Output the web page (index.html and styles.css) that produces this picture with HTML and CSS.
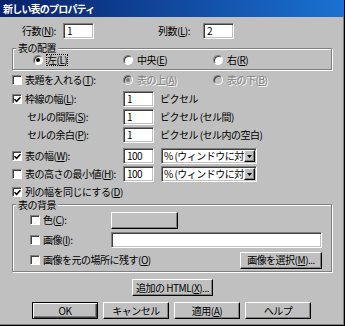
FILE: index.html
```html
<!DOCTYPE html>
<html lang="ja">
<head>
  <meta charset="UTF-8" />
  <title>新しい表のプロパティ</title>
  <link rel="stylesheet" href="styles.css">
</head>
<body>
  <div class="dialog">
    <div class="titlebar">新しい表のプロパティ</div>

    <div class="body">
      <div class="row row-count">
        <span class="lbl-rows">行数(<u>N</u>):</span>
        <span class="field w-num">1</span>
        <span class="lbl-cols">列数(<u>L</u>):</span>
        <span class="field w-num">2</span>
      </div>

      <div class="group group-align">
        <span class="legend">表の配置</span>
        <div class="row radios">
          <span class="opt"><span class="radio checked"></span><span class="focus">左(<u>L</u>)</span></span>
          <span class="opt"><span class="radio"></span>中央(<u>E</u>)</span>
          <span class="opt"><span class="radio"></span>右(<u>R</u>)</span>
        </div>
      </div>

      <div class="row row-caption">
        <span class="col-a"><span class="check"></span>表題を入れる(<u>T</u>):</span>
        <span class="opt disabled"><span class="radio checked"></span>表の上(<u>A</u>)</span>
        <span class="opt disabled"><span class="radio"></span>表の下(<u>B</u>)</span>
      </div>

      <div class="row row-field gap5">
        <span class="col-a"><span class="check on"><svg viewBox="0 0 7 7"><path d="M0.5 3.2 L2.6 5.3 L6.5 1.2"/></svg></span>枠線の幅(<u>L</u>):</span>
        <span class="field w-num">1</span>
        <span class="unit">ピクセル</span>
      </div>
      <div class="row row-field gap2">
        <span class="col-a indent">セルの間隔(<u>S</u>):</span>
        <span class="field w-num">1</span>
        <span class="unit">ピクセル (セル間)</span>
      </div>
      <div class="row row-field gap2">
        <span class="col-a indent">セルの余白(<u>P</u>):</span>
        <span class="field w-num">1</span>
        <span class="unit">ピクセル (セル内の空白)</span>
      </div>

      <div class="row row-field gap5">
        <span class="col-a"><span class="check on"><svg viewBox="0 0 7 7"><path d="M0.5 3.2 L2.6 5.3 L6.5 1.2"/></svg></span>表の幅(<u>W</u>):</span>
        <span class="field w-num">100</span>
        <span class="field select"><span class="sel-text">% (ウィンドウに対して)</span><span class="drop"><svg viewBox="0 0 7 4"><path d="M0 0 H7 L3.5 4 Z"/></svg></span></span>
      </div>
      <div class="row row-field gap2">
        <span class="col-a"><span class="check"></span>表の高さの最小値(<u>H</u>):</span>
        <span class="field w-num">100</span>
        <span class="field select"><span class="sel-text">% (ウィンドウに対して)</span><span class="drop"><svg viewBox="0 0 7 4"><path d="M0 0 H7 L3.5 4 Z"/></svg></span></span>
      </div>
      <div class="row row-equal">
        <span class="col-a"><span class="check on"><svg viewBox="0 0 7 7"><path d="M0.5 3.2 L2.6 5.3 L6.5 1.2"/></svg></span>列の幅を同じにする(<u>D</u>)</span>
      </div>

      <div class="group group-bg">
        <span class="legend">表の背景</span>
        <div class="row bg-row first">
          <span class="col-b"><span class="check"></span>色(<u>C</u>):</span>
          <span class="btn color-btn"></span>
        </div>
        <div class="row bg-row">
          <span class="col-b"><span class="check"></span>画像(<u>I</u>):</span>
          <span class="field w-img"></span>
        </div>
        <div class="row bg-row">
          <span class="col-c"><span class="check"></span>画像を元の場所に残す(<u>O</u>)</span>
          <span class="btn pick-btn">画像を選択(<u>M</u>)...</span>
        </div>
      </div>

      <div class="row row-extra">
        <span class="btn extra-btn">追加の HTML(<u>X</u>)...</span>
      </div>

      <div class="row row-buttons">
        <span class="btn default">OK</span>
        <span class="btn">キャンセル</span>
        <span class="btn">適用(<u>A</u>)</span>
        <span class="btn">ヘルプ</span>
      </div>
    </div>
  </div>
</body>
</html>
```

FILE: styles.css
```css
body {
  margin: 0;
  background: #c0c0c0;
}
.dialog {
  width: 345px;
  height: 326px;
  box-sizing: border-box;
  background: #c0c0c0;
  border-right: 1px solid #000;
  border-bottom: 1px solid #000;
  box-shadow: inset -1px -1px 0 #808080;
  font-family: "Noto Sans CJK JP", "Noto Sans", sans-serif;
  font-size: 10px;
  letter-spacing: -0.5px;
  line-height: 12px;
  color: #000;
}
u {
  text-underline-offset: 1px;
}
.titlebar {
  height: 17px;
  padding-left: 3px;
  display: flex;
  align-items: center;
  color: #fff;
  font-weight: bold;
  letter-spacing: -0.8px;
  background: linear-gradient(90deg, #08206a, #1a72d2);
}
.body {
  padding-left: 12px;
  display: flex;
  flex-direction: column;
}
.row {
  display: flex;
  align-items: center;
  white-space: nowrap;
}

/* sunken edit box */
.field {
  box-sizing: border-box;
  height: 16px;
  background: #fff;
  border: 1px solid;
  border-color: #808080 #fff #fff #808080;
  box-shadow: inset 1px 1px 0 #404040, inset -1px -1px 0 #c0c0c0;
  padding-left: 3px;
  display: flex;
  align-items: center;
}
.w-num { width: 31px; }
.w-img { width: 211px; }

/* raised push button */
.btn {
  box-sizing: border-box;
  height: 17px;
  background: #c0c0c0;
  border: 1px solid;
  border-color: #fff #000 #000 #fff;
  box-shadow: inset -1px -1px 0 #808080;
  display: flex;
  align-items: center;
  justify-content: center;
}
.btn.default {
  border-color: #000;
  box-shadow: inset 1px 1px 0 #fff, inset -1px -1px 0 #404040, inset -2px -2px 0 #808080;
}

/* check box and radio */
.check {
  box-sizing: border-box;
  width: 10px;
  height: 10px;
  margin-right: 3px;
  background: #fff;
  border: 1px solid;
  border-color: #808080 #fff #fff #808080;
  box-shadow: inset 1px 1px 0 #404040;
  display: inline-flex;
  align-items: center;
  justify-content: center;
  flex: none;
}
.check svg {
  width: 7px;
  height: 7px;
  margin: 1px 0 0 1px;
}
.check path {
  fill: none;
  stroke: #000;
  stroke-width: 1.6;
}
.radio {
  box-sizing: border-box;
  width: 10px;
  height: 10px;
  margin-right: 4px;
  border-radius: 50%;
  background: #fff;
  border: 1px solid;
  border-color: #808080 #fff #fff #808080;
  box-shadow: inset 1px 1px 0 #404040;
  display: inline-flex;
  align-items: center;
  justify-content: center;
  flex: none;
}
.radio.checked::after {
  content: "";
  width: 4px;
  height: 4px;
  border-radius: 50%;
  background: #000;
}
.opt {
  width: 90px;
  display: flex;
  align-items: center;
}
.opt.disabled {
  color: #808080;
  text-shadow: 1px 1px 0 #fff;
}
.opt.disabled .radio {
  background: #c0c0c0;
}
.opt.disabled .radio.checked::after {
  background: #808080;
}
.focus {
  line-height: 10px;
  outline: 1px dotted #000;
  outline-offset: 0;
}

/* row 1 */
.row-count {
  height: 16px;
  margin-top: 6px;
}
.lbl-rows {
  margin-left: 10px;
  width: 41px;
}
.lbl-cols {
  margin-left: 64px;
  width: 45px;
}

/* group boxes */
.group {
  box-sizing: border-box;
  width: 320px;
  border: 1px solid #808080;
  box-shadow: 1px 1px 0 #fff, inset 1px 1px 0 #fff;
  display: flex;
  flex-direction: column;
}
.legend {
  align-self: flex-start;
  margin: -7px 0 0 3px;
  padding: 0 2px;
  background: #c0c0c0;
  line-height: 12px;
}
.group-align {
  margin-top: 9px;
  padding: 0 0 3px 20px;
}
.group-align .legend {
  margin-left: -17px;
}
.radios {
  height: 12px;
}

.row-caption {
  height: 12px;
  margin-top: 4px;
}
.col-a {
  width: 111px;
  display: flex;
  align-items: center;
}
.col-a.indent {
  padding-left: 15px;
  box-sizing: border-box;
}
.row-field {
  height: 16px;
}
.gap5 { margin-top: 5px; }
.gap2 { margin-top: 2px; }
.unit {
  margin-left: 6px;
}
.select {
  width: 96px;
  margin-left: 7px;
  padding: 0 1px 0 2px;
  justify-content: space-between;
  overflow: hidden;
}
.sel-text {
  overflow: hidden;
  flex: 1;
}
.drop {
  box-sizing: border-box;
  width: 11px;
  height: 12px;
  flex: none;
  background: #c0c0c0;
  border: 1px solid;
  border-color: #fff #000 #000 #fff;
  box-shadow: inset -1px -1px 0 #808080;
  display: flex;
  align-items: center;
  justify-content: center;
}
.drop svg {
  width: 5px;
  height: 3px;
}
.row-equal {
  height: 12px;
  margin-top: 4px;
}

.group-bg {
  margin-top: 6px;
  padding: 0 0 3px 17px;
}
.group-bg .legend {
  margin-top: -6px;
  margin-left: -14px;
}
.bg-row {
  height: 16px;
  margin-top: 4px;
}
.bg-row.first {
  margin-top: 1px;
}
.col-b {
  width: 81px;
  display: flex;
  align-items: center;
}
.col-c {
  width: 210px;
  display: flex;
  align-items: center;
}
.color-btn {
  width: 67px;
}
.pick-btn {
  width: 82px;
}

.row-extra {
  margin-top: 7px;
  padding-left: 120px;
}
.extra-btn {
  width: 81px;
}
.row-buttons {
  margin-top: 6px;
  padding-left: 20px;
  gap: 5px;
}
.row-buttons .btn {
  width: 66px;
}
```
